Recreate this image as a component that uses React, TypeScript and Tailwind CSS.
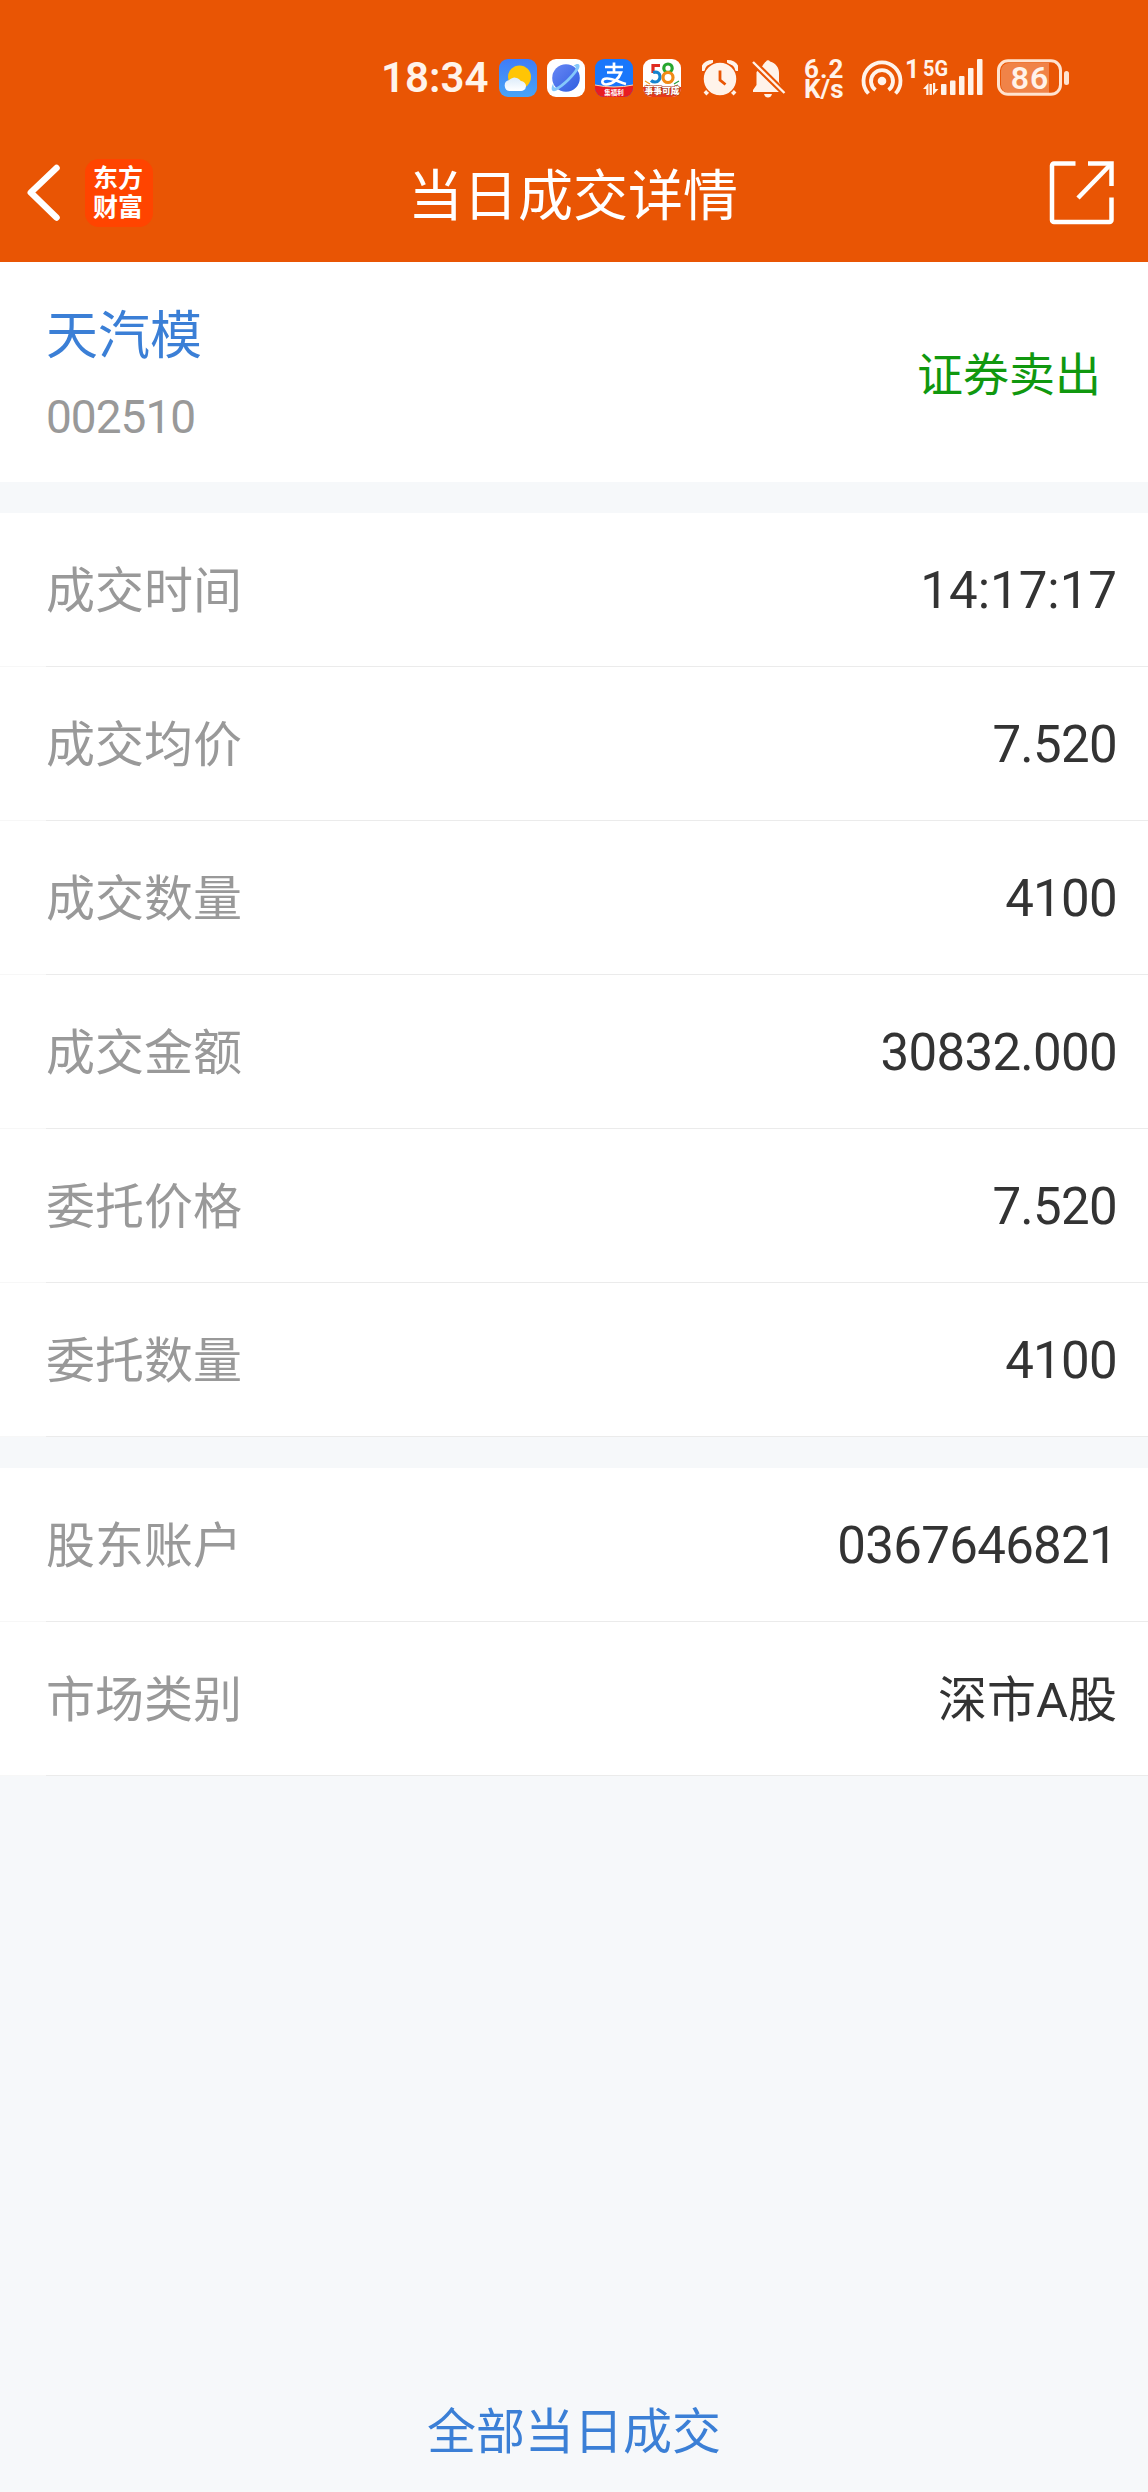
type Row = { label: string; value: string; valueClass: string };

const digits = "pt-px font-[Roboto] text-[51px] tracking-[-0.7px]";

const dealRows: Row[] = [
  { label: "成交时间", value: "14:17:17", valueClass: "pt-px font-[Roboto] text-[51px]" },
  { label: "成交均价", value: "7.520", valueClass: digits },
  { label: "成交数量", value: "4100", valueClass: digits },
  { label: "成交金额", value: "30832.000", valueClass: digits },
  { label: "委托价格", value: "7.520", valueClass: digits },
  { label: "委托数量", value: "4100", valueClass: digits },
];

const accountRows: Row[] = [
  { label: "股东账户", value: "0367646821", valueClass: digits },
  { label: "市场类别", value: "深市A股", valueClass: "pt-[3px] font-[Roboto,'Noto_Sans_CJK_SC',sans-serif] text-[49px]" },
];

function WeatherIcon() {
  return (
    <svg className="ml-3 shrink-0" width="38" height="38" viewBox="0 0 38 38">
      <defs>
        <linearGradient id="sky" x1="0" y1="0" x2="0" y2="1">
          <stop offset="0" stopColor="#3f7cf8" />
          <stop offset="1" stopColor="#48a4f6" />
        </linearGradient>
        <linearGradient id="cloud" x1="0" y1="0" x2="0" y2="1">
          <stop offset="0" stopColor="#dcebfa" />
          <stop offset="1" stopColor="#ffffff" />
        </linearGradient>
      </defs>
      <rect width="38" height="38" rx="9" fill="url(#sky)" />
      <circle cx="20.5" cy="18" r="11.5" fill="#ffc505" />
      <path d="M11 32a5.5 5.5 0 0 1-.8-10.9 7.2 7.2 0 0 1 11.6 1A5 5 0 1 1 21 32z" fill="url(#cloud)" />
    </svg>
  );
}

function BrowserIcon() {
  return (
    <svg className="ml-2.5 shrink-0" width="38" height="38" viewBox="0 0 38 38">
      <defs>
        <linearGradient id="planet" x1="0" y1="0" x2="1" y2="1">
          <stop offset="0" stopColor="#6888f5" />
          <stop offset="1" stopColor="#2f5de0" />
        </linearGradient>
      </defs>
      <rect width="38" height="38" rx="9" fill="#fff" />
      <circle cx="19" cy="19" r="13.8" fill="url(#planet)" />
      <path
        d="M6.500 24C3.500 29 4 34 9.500 31.500 17 28 28.500 16 32 9.500 34 5 30.500 3.500 26.500 6.800c3.500.5 2.500 3.200-.5 6.700C20.500 20 14 26 9.500 28.200 7 29.200 6 27.500 6.500 24z"
        fill="#85c8fb"
      />
    </svg>
  );
}

function AlipayIcon() {
  return (
    <svg className="ml-2.5 shrink-0" width="38" height="38" viewBox="0 0 38 38">
      <clipPath id="tile">
        <rect width="38" height="38" rx="9" />
      </clipPath>
      <g clipPath="url(#tile)">
        <rect width="38" height="38" fill="#1977fb" />
        <path d="M19 3.500v10M10 8h18M12 13.500h14c-2 6-8 12-15 12-5 0-5-6 1-6 7 0 12 4 19 5.500" fill="none" stroke="#fff" strokeWidth="2.700" />
        <path d="M0 26q19 4 38 0v12H0z" fill="#e81c23" />
        <path d="M0 26q19 4 38 0" fill="none" stroke="#ffd9a8" strokeWidth="1" />
        <text x="19" y="36" textAnchor="middle" fontSize="6.500" fontWeight="700" fill="#fff" fontFamily="Noto Sans CJK SC, sans-serif">
          集福利
        </text>
      </g>
    </svg>
  );
}

function LocalIcon() {
  return (
    <svg className="ml-2.5 shrink-0" width="38" height="38" viewBox="0 0 38 38">
      <rect width="38" height="38" rx="9" fill="#fff" />
      <path d="M0 28h38v1a9 9 0 0 1-9 9H9a9 9 0 0 1-9-9z" fill="#e8381c" />
      <path d="M2 22l5 3M3 26l3 1" stroke="#f29a1c" strokeWidth="1.200" />
      <path d="M36 22l-5 3M35 26l-3 1" stroke="#24a03c" strokeWidth="1.200" />
      <path d="M17 6.500H10V14" fill="none" stroke="#e02a20" strokeWidth="3.200" />
      <path d="M10 13.500c9-3 9 9.500 2 9.500-2 0-3-.6-4-1.500" fill="none" stroke="#1583cf" strokeWidth="3.200" />
      <circle cx="25" cy="9.200" r="4.200" fill="none" stroke="#27a62f" strokeWidth="3.200" />
      <circle cx="25" cy="18.500" r="5" fill="none" stroke="#f18a16" strokeWidth="3.200" />
      <text
        x="19"
        y="35"
        textAnchor="middle"
        fontSize="8.800"
        fontWeight="900"
        fill="#fff"
        stroke="#a83a1c"
        strokeWidth="1"
        paintOrder="stroke"
        fontFamily="Noto Sans CJK SC, sans-serif"
      >
        事事可成
      </text>
    </svg>
  );
}

function AlarmIcon() {
  return (
    <svg className="ml-[21px] shrink-0" width="36" height="38" viewBox="0 0 36 38">
      <path d="M1 12Q1 3 11 3M25 3q10 0 10 9" fill="none" stroke="#fff3ea" strokeWidth="4" />
      <path d="M7 31l-4 4M29 31l4 4" stroke="#fff3ea" strokeWidth="4" />
      <circle cx="18" cy="20" r="17" fill="#fff3ea" stroke="#e95504" strokeWidth="1.500" />
      <path d="M18 11.500v9.500l5.500 4.500" fill="none" stroke="#e95504" strokeWidth="2.800" />
    </svg>
  );
}

function MutedIcon() {
  return (
    <svg className="ml-3.5 shrink-0" width="34" height="39" viewBox="0 0 34 39">
      <path d="M14 2.500a2.300 2.300 0 0 1 4 0C24 4 27 9 27 14v9l3 6 .500 4H1v-2l3.500-5V14C4.500 8 8 4 14 2.500z" fill="#fff3ea" />
      <path d="M12 35h8q-1 3.500-4 3.500t-4-3.500z" fill="#fff3ea" />
      {/* upper left of the bell is cut away by the slash */}
      <path d="M0 0h14v2L8 10 3 14H0z" fill="#e95504" />
      <path d="M1 3l31.500 31" stroke="#e95504" strokeWidth="6.500" />
      <path d="M1 3l31.500 31" stroke="#fff3ea" strokeWidth="2.400" />
    </svg>
  );
}

function HotspotIcon() {
  return (
    <svg className="ml-4 shrink-0" width="42" height="38" viewBox="0 0 42 38">
      <circle cx="21" cy="22" r="4.300" fill="#fff3ea" />
      <path d="M7.500 34.500a18.500 18.500 0 1 1 27 0M14.500 31a11 11 0 1 1 13 0" fill="none" stroke="#fff3ea" strokeWidth="3.800" />
    </svg>
  );
}

function SignalIcon() {
  return (
    <svg className="ml-[2px] shrink-0 overflow-visible" width="78" height="38" viewBox="0 0 78 38">
      <g fill="#fff3ea" fontFamily="Roboto, sans-serif" fontWeight="700">
        <text x="0" y="19" fontSize="25">1</text>
        <text x="18" y="17" fontSize="22" textLength="25" lengthAdjust="spacingAndGlyphs">5G</text>
        <path d="M18 30l5.500-6v12h-2.200v-6zM33.500 30L28 36V24h2.200v6z" />
        <rect x="24.500" y="25" width="2.400" height="11" />
        <rect x="36" y="25" width="5.500" height="11" rx="1" />
        <rect x="45" y="21.500" width="5.500" height="14.500" rx="1" />
        <rect x="54" y="17" width="5.500" height="19" rx="1" />
        <rect x="63" y="9" width="5.500" height="27" rx="1" />
        <rect x="72" y="0" width="5.500" height="36" rx="1" />
      </g>
    </svg>
  );
}

function BatteryIcon() {
  return (
    <svg className="ml-3.5 shrink-0" width="74" height="38" viewBox="0 0 74 38">
      <path d="M12 4h40v30H12a8 8 0 0 1-8-8V12a8 8 0 0 1 8-8z" fill="#f08348" />
      <rect x="1.500" y="1.800" width="62" height="33.500" rx="9.500" fill="none" stroke="#ffe3d0" strokeWidth="3" />
      <rect x="67" y="12" width="5" height="14" rx="2.500" fill="#ffe3d0" />
      <text x="33" y="30" textAnchor="middle" fontSize="32" fontWeight="600" letterSpacing="1" fill="#fff3ea" fontFamily="Roboto, sans-serif">
        86
      </text>
    </svg>
  );
}

function StatusBar() {
  return (
    <div className="flex h-[125px] items-start pt-[59px] pl-[381px]">
      <span className="w-[106px] shrink-0 whitespace-nowrap font-[Roboto] text-[42px] leading-[38px] font-semibold text-[#fff3ea]">
        18:34
      </span>
      <WeatherIcon />
      <BrowserIcon />
      <AlipayIcon />
      <LocalIcon />
      <AlarmIcon />
      <MutedIcon />
      <div className="ml-[18px] w-[41px] shrink-0 whitespace-nowrap font-[Roboto] text-[26px] leading-[20px] font-bold text-[#fff3ea]">
        <p className="tracking-[1px]">6.2</p>
        <p>K/s</p>
      </div>
      <HotspotIcon />
      <SignalIcon />
      <BatteryIcon />
    </div>
  );
}

function NavBar() {
  return (
    <div className="grid h-[137px] grid-cols-[1fr_auto_1fr] items-center pr-8 pl-[26px] text-white">
      <div className="flex items-center pb-0.5">
        <svg width="36" height="58" viewBox="0 0 36 58" fill="none" stroke="#fff" strokeWidth="6.500" strokeLinecap="round" strokeLinejoin="round">
          <path d="M30.500 4L4.800 28.500l25.700 25" />
        </svg>
        <div className="ml-[23px] flex h-[68px] w-[68px] flex-col items-center justify-center rounded-[14px] bg-[#ff4400] pr-0.5 pb-1 text-[25px] leading-[29px] font-bold">
          <span>东方</span>
          <span>财富</span>
        </div>
      </div>
      <h1 className="pb-1 pl-1 text-[55px] leading-none">当日成交详情</h1>
      <svg className="mr-px mb-px justify-self-end" width="66" height="66" viewBox="0 0 66 66" fill="none" stroke="#fff" strokeWidth="4.500" strokeLinejoin="round">
        <path d="M26.500 3.500H5a2 2 0 0 0-2 2V60a2 2 0 0 0 2 2h55.500a2 2 0 0 0 2-2V37.500" />
        <path d="M39 3.500h23.500V26" strokeLinejoin="miter" />
        <path d="M62 4L29 38" />
      </svg>
    </div>
  );
}

function DetailList({ rows }: { rows: Row[] }) {
  return (
    <dl className="bg-white">
      {rows.map((row) => (
        <div key={row.label}>
          <div className="flex h-[153px] items-center justify-between pr-[31px] pl-[46px]">
            <dt className="pb-1.5 text-[49px] leading-none text-[#999999]">{row.label}</dt>
            <dd className={`leading-none text-[#333333] ${row.valueClass}`}>{row.value}</dd>
          </div>
          {/* separator is fainter under the left inset */}
          <div className="flex h-px bg-[#ebebeb]">
            <div className="w-[46px] bg-[#f7f7f7]" />
          </div>
        </div>
      ))}
    </dl>
  );
}

export default function App() {
  return (
    <div className="flex h-[2492px] w-[1148px] flex-col overflow-hidden bg-[#f6f8fa] font-['Noto_Sans_CJK_SC',sans-serif]">
      <header className="bg-[#e95504]">
        <StatusBar />
        <NavBar />
      </header>

      {/* Stock summary */}
      <section className="flex h-[220px] items-center justify-between bg-white pr-[47px] pl-[46px]">
        <div>
          <h2 className="text-[52px] leading-[58px] text-[#3b7fd6]">天汽模</h2>
          <p className="mt-[29px] -mb-0.5 font-[Roboto] text-[46px] leading-[54px] tracking-[-1px] text-[#999999]">002510</p>
        </div>
        <span className="pb-[3px] text-[46px] leading-none text-[#10980f]">证券卖出</span>
      </section>

      <main className="mt-[31px] flex flex-col gap-[31px]">
        <DetailList rows={dealRows} />
        <DetailList rows={accountRows} />
      </main>

      <footer className="mt-auto flex h-[122px] items-center justify-center pb-[7px]">
        <a className="text-[49px] leading-none text-[#3b7fd6]">全部当日成交</a>
      </footer>
    </div>
  );
}
